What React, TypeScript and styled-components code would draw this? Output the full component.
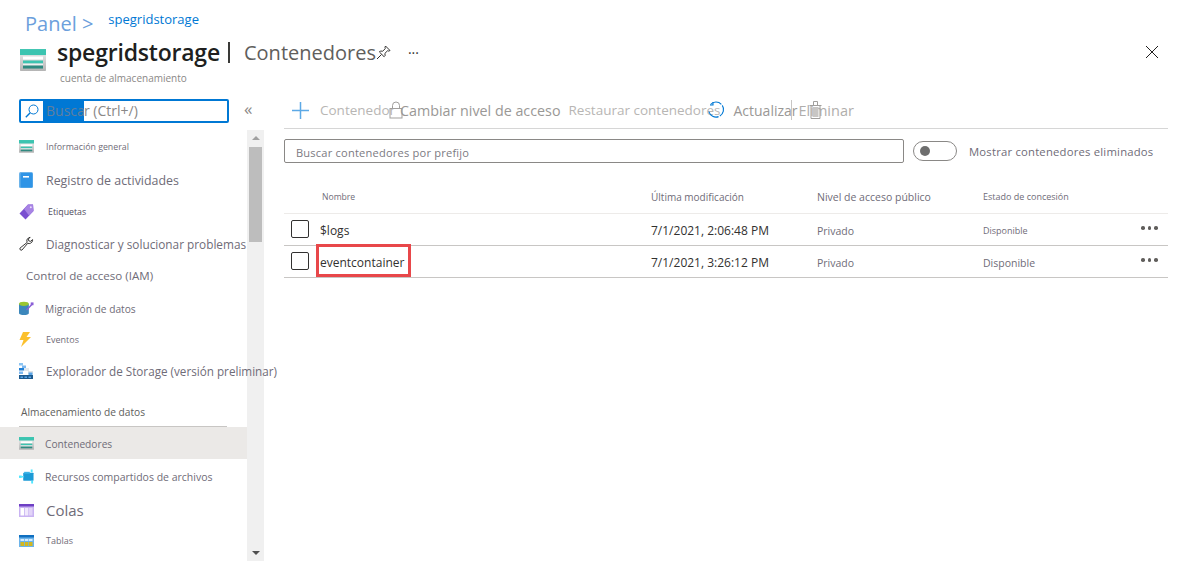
import styled, { createGlobalStyle } from 'styled-components';

const GlobalStyle = createGlobalStyle`
	html, body {
		margin: 0;
		padding: 0;
		background: #ffffff;
		font-family: "Open Sans", "Liberation Sans", sans-serif;
	}
	*, *::before, *::after {
		box-sizing: border-box;
	}
`;

function StorageIcon({ size = 26, id = 'a' }: { size?: number; id?: string }) {
	return (
		<svg width={size} height={size * 0.85} viewBox="0 0 26 22">
			<defs>
				<linearGradient id={`frame-${id}`} x1="0" y1="0" x2="0" y2="1">
					<stop offset="0" stopColor="#f2f2f2" />
					<stop offset="1" stopColor="#b4b4b4" />
				</linearGradient>
			</defs>
			<rect x="0" y="0" width="26" height="22" rx="1" fill={`url(#frame-${id})`} />
			<rect x="0" y="0" width="26" height="6" fill="#3cc4b0" />
			<rect x="3" y="7.500" width="20" height="3" fill="#ffffff" />
			<rect x="3" y="11.500" width="20" height="3" fill="#3cc4b0" />
			<rect x="3" y="14.500" width="20" height="2" fill="#eef0f0" />
			<rect x="3" y="16.500" width="20" height="3" fill="#2f8a80" />
		</svg>
	);
}

function LogIcon() {
	return (
		<svg width="14" height="16" viewBox="0 0 14 16">
			<rect x="0" y="0" width="14" height="16" rx="1.500" fill="#6db4ea" />
			<rect x="1.500" y="1" width="12" height="14.500" rx="1" fill="#2f94e6" />
			<rect x="4" y="4" width="6" height="1.600" fill="#ffffff" />
		</svg>
	);
}

function TagIcon() {
	return (
		<svg width="15" height="16" viewBox="0 0 15 16">
			<path d="M9 0.500h5L14.500 7 6.500 15.500 0.500 9.500z" fill="#7a4fd0" />
			<path d="M9 0.500h5L14.500 7 10 11.500 5 5z" fill="#a783e4" />
			<circle cx="11.800" cy="3.200" r="1" fill="#e8dcfa" />
		</svg>
	);
}

function WrenchIcon() {
	return (
		<svg width="17" height="16" viewBox="0 0 17 16" fill="none" stroke="#201f1e" strokeWidth="1">
			<path d="M10.600 1.200a4 4 0 0 0-1.400 5L1.200 12.600a1.600 1.600 0 0 0 2.200 2.200l6.500-7.600a4 4 0 0 0 5.400-2.800l.1-1.400-2.400 2-2-.6-.4-2 2-2z" />
		</svg>
	);
}

function MigrationIcon() {
	return (
		<svg width="16" height="15" viewBox="0 0 16 15">
			<path d="M0 2.500h10.500v10c0 1.200-2.300 2-5.200 2S0 13.700 0 12.500z" fill="#3b87bb" />
			<ellipse cx="5.200" cy="2.500" rx="5.200" ry="2.200" fill="#9ac631" />
			<path d="M8 9l6-6" stroke="#8a5ed6" strokeWidth="1.500" />
			<rect x="12.500" y="1" width="3" height="3" fill="#8a5ed6" />
		</svg>
	);
}

function BoltIcon() {
	return (
		<svg width="12" height="15" viewBox="0 0 12 15">
			<path d="M4 0h7L7.500 5H12L2 15l2.500-7H0.500z" fill="#fbc02d" />
		</svg>
	);
}

function ExplorerIcon() {
	return (
		<svg width="14" height="16" viewBox="0 0 14 16">
			<rect x="0" y="0" width="4" height="2.500" fill="#8cc4f2" />
			<rect x="3" y="2.500" width="4" height="2.500" fill="#7cb8ef" />
			<rect x="0" y="5" width="5" height="2.500" fill="#1f7fd6" />
			<rect x="5" y="5" width="5" height="3" fill="#e3e9ee" />
			<rect x="9" y="8" width="5" height="3" fill="#dfe3e6" />
			<rect x="0" y="8.500" width="4" height="2.500" fill="#7cb8ef" />
			<rect x="9.500" y="9.500" width="4" height="2.500" fill="#5aa5e6" />
			<rect x="0" y="12" width="14" height="4" fill="#1d5a8f" />
			<rect x="1.500" y="13.500" width="2.500" height="1.500" fill="#5aa5e6" />
			<rect x="5.500" y="13.500" width="2.500" height="1.500" fill="#5aa5e6" />
			<rect x="9.500" y="13.500" width="2.500" height="1.500" fill="#5aa5e6" />
		</svg>
	);
}

function ShareIcon() {
	return (
		<svg width="16" height="15" viewBox="0 0 16 15">
			<rect x="4.500" y="3.500" width="11" height="8.500" rx="0.500" fill="#1c9ad6" />
			<rect x="5.500" y="2.500" width="6" height="2" fill="#3cb4e8" />
			<rect x="0" y="6.500" width="3" height="2.500" fill="#50e6ff" />
			<rect x="3" y="7" width="2" height="1.500" fill="#50e6ff" />
			<rect x="12.500" y="0" width="2" height="3" fill="#50e6ff" />
			<rect x="13" y="12" width="2" height="3" fill="#50e6ff" />
		</svg>
	);
}

function QueueIcon() {
	return (
		<svg width="15" height="13" viewBox="0 0 15 13">
			<rect x="0" y="0" width="15" height="13" fill="#c9b3f2" />
			<rect x="0" y="0" width="15" height="2.500" fill="#6e3fc4" />
			<rect x="1.500" y="4" width="3.500" height="7.500" fill="#ffffff" />
			<rect x="5.800" y="4" width="3.500" height="7.500" fill="#f0e8fc" />
			<rect x="10" y="4" width="3.500" height="7.500" fill="#e2d4f8" />
		</svg>
	);
}

function TableIcon() {
	return (
		<svg width="15" height="12" viewBox="0 0 15 12">
			<rect x="0" y="0" width="15" height="12" fill="#6db4ea" />
			<rect x="0" y="0" width="15" height="2.500" fill="#0f6fc0" />
			<rect x="1.500" y="4" width="3.500" height="2" fill="#d4ecff" />
			<rect x="5.800" y="4" width="3.500" height="2" fill="#d4ecff" />
			<rect x="10" y="4" width="3.500" height="2" fill="#d4ecff" />
			<rect x="1.500" y="7" width="3.500" height="4" fill="#d3b820" />
			<rect x="5.800" y="7" width="3.500" height="4" fill="#d3b820" />
			<rect x="10" y="7" width="3.500" height="4" fill="#d3b820" />
		</svg>
	);
}

function SearchIcon() {
	return (
		<svg width="14" height="14" viewBox="0 0 14 14" fill="none" stroke="#0078d4" strokeWidth="1">
			<circle cx="8.500" cy="5.500" r="4.500" />
			<path d="M5.200 8.800L0.800 13.200" strokeWidth="1.400" />
		</svg>
	);
}

function PinIcon() {
	return (
		<svg width="15" height="15" viewBox="0 0 15 15" fill="none" stroke="#323130" strokeWidth="1">
			<path d="M9.500 1L14 5.500l-1.200.6-1.300-.3-2.600 2.600.2 2.300-1 1L3.400 7l1-1 2.300.2 2.600-2.600-.3-1.300zM5.500 9.500L1 14" />
		</svg>
	);
}

function CloseIcon() {
	return (
		<svg width="14" height="14" viewBox="0 0 14 14" stroke="#201f1e" strokeWidth="1">
			<path d="M1 1l12 12M13 1L1 13" />
		</svg>
	);
}

function PlusIcon() {
	return (
		<svg width="17" height="17" viewBox="0 0 17 17" stroke="#5ca9e6" strokeWidth="1.500">
			<path d="M8.500 0v17M0 8.500h17" />
		</svg>
	);
}

function LockIcon() {
	return (
		<svg width="14" height="18" viewBox="0 0 14 18" fill="none" stroke="#a19f9d" strokeWidth="1">
			<rect x="1" y="7.500" width="12" height="9.500" />
			<path d="M3.500 7.500V4.500a3.500 3.500 0 0 1 7 0v3" />
		</svg>
	);
}

function RefreshIcon() {
	return (
		<svg width="18" height="18" viewBox="0 0 18 18" fill="none" stroke="#0078d4" strokeWidth="1.100">
			<path d="M3.500 3.500A7.500 7.500 0 1 1 1.600 9.500" strokeDasharray="12 1.500" />
			<path d="M6 1v3H3" />
		</svg>
	);
}

function TrashIcon() {
	return (
		<svg width="13" height="18" viewBox="0 0 13 18" fill="none" stroke="#a19f9d" strokeWidth="1">
			<path d="M0.500 4.500h12M2 4.500v13h9v-13M4.500 4.500v-4h4v4" />
			<rect x="3.500" y="6" width="6" height="10" fill="#c8c6c4" stroke="none" />
		</svg>
	);
}

const menuTop = [
	{ icon: <StorageIcon size={15} id="b" />, label: 'Información general', size: 8.8, h: 33, gap: 16 },
	{ icon: <LogIcon />, label: 'Registro de actividades', size: 12.400, h: 34, gap: 16 },
	{ icon: <TagIcon />, label: 'Etiquetas', size: 8.800, h: 29, gap: 18, dark: true },
	{ icon: <WrenchIcon />, label: 'Diagnosticar y solucionar problemas', size: 11.800, h: 35, gap: 16 },
];

const menuMiddle = [
	{ icon: <MigrationIcon />, label: 'Migración de datos', size: 10.200, h: 33, gap: 15 },
	{ icon: <BoltIcon />, label: 'Eventos', size: 9, h: 29, gap: 16 },
	{ icon: <ExplorerIcon />, label: 'Explorador de Storage (versión preliminar)', size: 11.700, h: 34, gap: 16 },
];

const menuBottom = [
	{ icon: <ShareIcon />, label: 'Recursos compartidos de archivos', size: 10.500, h: 35, gap: 15 },
	{ icon: <QueueIcon />, label: 'Colas', size: 15, h: 32, gap: 16 },
	{ icon: <TableIcon />, label: 'Tablas', size: 9, h: 29, gap: 16 },
];

const rows = [
	{ name: '$logs', date: '7/1/2021, 2:06:48 PM', state: 'Disponible', stateSize: 9 },
	{ name: 'eventcontainer', date: '7/1/2021, 3:26:12 PM', state: 'Disponible', stateSize: 10.500, marked: true },
];

export default function App() {
	return (
		<Page>
			<GlobalStyle />
			<Breadcrumb>
				<PanelLink>Panel &gt;</PanelLink>
				<CrumbLink>spegridstorage</CrumbLink>
			</Breadcrumb>

			<Header>
				<HeaderIcon>
					<StorageIcon />
				</HeaderIcon>
				<HeaderText>
					<TitleLine>
						<Title>spegridstorage</Title>
						<TitleBar />
						<PageName>Contenedores</PageName>
						<PinIcon />
						<MoreSmall>···</MoreSmall>
					</TitleLine>
					<Subtitle>cuenta de almacenamiento</Subtitle>
				</HeaderText>
				<CloseButton>
					<CloseIcon />
				</CloseButton>
			</Header>

			<Body>
				<Sidebar>
					<SearchRow>
						<SearchBox>
							<SearchIconCell>
								<SearchIcon />
							</SearchIconCell>
							<SearchText>
								<Selected>Busca</Selected>r (Ctrl+/)
							</SearchText>
						</SearchBox>
						<Collapse>«</Collapse>
					</SearchRow>
					<MenuArea>
						<Menu>
							{menuTop.map((m) => (
								<MenuRow key={m.label} $h={m.h}>
									<MenuIcon>{m.icon}</MenuIcon>
									<MenuLabel $size={m.size} $gap={m.gap} $dark={m.dark}>
										{m.label}
									</MenuLabel>
								</MenuRow>
							))}
							<GroupLabel>Control de acceso (IAM)</GroupLabel>
							{menuMiddle.map((m) => (
								<MenuRow key={m.label} $h={m.h}>
									<MenuIcon>{m.icon}</MenuIcon>
									<MenuLabel $size={m.size} $gap={m.gap}>
										{m.label}
									</MenuLabel>
								</MenuRow>
							))}
							<SectionLabel>Almacenamiento de datos</SectionLabel>
							<MenuRow $h={32} $active>
								<MenuIcon>
									<StorageIcon size={15} id="c" />
								</MenuIcon>
								<MenuLabel $size={10.200} $gap={15}>
									Contenedores
								</MenuLabel>
							</MenuRow>
							{menuBottom.map((m) => (
								<MenuRow key={m.label} $h={m.h}>
									<MenuIcon>{m.icon}</MenuIcon>
									<MenuLabel $size={m.size} $gap={m.gap}>
										{m.label}
									</MenuLabel>
								</MenuRow>
							))}
						</Menu>
						<Scrollbar>
							<ArrowUp />
							<Thumb />
							<ScrollSpace />
							<ArrowDown />
						</Scrollbar>
					</MenuArea>
				</Sidebar>

				<Main>
					<Toolbar>
						<PlusIcon />
						<ToolText $ml={11} $w={69}>
							Contenedor
						</ToolText>
						<ToolIcon>
							<LockIcon />
						</ToolIcon>
						<ToolText $ml={-3} $size={14.300} $dark>
							Cambiar nivel de acceso
						</ToolText>
						<ToolText $ml={8} $w={139}>
							Restaurar contenedores
						</ToolText>
						<RefreshIcon />
						<ToolText $ml={8} $size={14} $dark>
							Actualizar
						</ToolText>
						<ToolDivider />
						<DeleteButton>
							Eliminar
							<TrashOverlay>
								<TrashIcon />
							</TrashOverlay>
						</DeleteButton>
					</Toolbar>

					<FilterRow>
						<FilterInput>Buscar contenedores por prefijo</FilterInput>
						<Toggle>
							<ToggleDot />
						</Toggle>
						<ToggleLabel>Mostrar contenedores eliminados</ToggleLabel>
					</FilterRow>

					<HeadRow>
						<span />
						<HeadCell $size={8.600} $ml={2}>
							Nombre
						</HeadCell>
						<HeadCell $size={10}>Última modificación</HeadCell>
						<HeadCell $size={10.500}>Nivel de acceso público</HeadCell>
						<HeadCell $size={9}>Estado de concesión</HeadCell>
						<span />
					</HeadRow>

					{rows.map((r) => (
						<DataRow key={r.name}>
							<Checkbox />
							<NameCell $marked={r.marked}>{r.name}</NameCell>
							<DateCell>{r.date}</DateCell>
							<MutedCell $size={10.500}>Privado</MutedCell>
							<MutedCell $size={r.stateSize}>{r.state}</MutedCell>
							<RowMore>
								<i />
								<i />
								<i />
							</RowMore>
						</DataRow>
					))}
				</Main>
			</Body>
		</Page>
	);
}

const Page = styled.div`
	width: 1188px;
	height: 561px;
	overflow: hidden;
	background: #ffffff;
	display: flex;
	flex-direction: column;
`;

const Breadcrumb = styled.div`
	height: 37px;
	padding-left: 25px;
	display: flex;
	align-items: flex-start;
	gap: 15px;
`;

const PanelLink = styled.span`
	font-size: 20px;
	line-height: 24px;
	margin-top: 12px;
	color: #6c9fdc;
`;

const CrumbLink = styled.span`
	font-size: 13px;
	line-height: 16px;
	margin-top: 11px;
	color: #0078d4;
`;

const Header = styled.div`
	height: 50px;
	padding: 0 29px 0 20px;
	display: flex;
	align-items: flex-start;
`;

const HeaderIcon = styled.div`
	width: 37px;
	padding-top: 12px;
`;

const HeaderText = styled.div`
	flex: 1;
	display: flex;
	flex-direction: column;
`;

const TitleLine = styled.div`
	display: flex;
	align-items: center;
	height: 30px;
`;

const Title = styled.h1`
	margin: 0;
	font-size: 23px;
	font-weight: 600;
	color: #201f1e;
	letter-spacing: -0.2px;
`;

const TitleBar = styled.span`
	width: 2px;
	height: 21px;
	margin: 0 14px 0 8px;
	background: #3a3a38;
`;

const PageName = styled.span`
	font-size: 20px;
	color: #605e5c;
`;

const MoreSmall = styled.span`
	margin-left: 17px;
	font-size: 14px;
	color: #323130;
`;

const Subtitle = styled.div`
	margin: 4px 0 0 3px;
	font-size: 10px;
	line-height: 14px;
	color: #8a8886;
`;

const CloseButton = styled.div`
	padding-top: 5px;
`;

const Body = styled.div`
	flex: 1;
	display: flex;
	min-height: 0;
`;

const Sidebar = styled.aside`
	width: 264px;
	display: flex;
	flex-direction: column;
`;

const SearchRow = styled.div`
	height: 43px;
	padding: 12px 0 0 19px;
	display: flex;
	align-items: flex-start;
`;

const SearchBox = styled.div`
	width: 210px;
	height: 24px;
	border: 2px solid #0078d4;
	border-radius: 2px;
	display: flex;
	align-items: stretch;
	background: #ffffff;
`;

const SearchIconCell = styled.div`
	width: 22px;
	display: flex;
	align-items: center;
	justify-content: center;
`;

const SearchText = styled.div`
	font-size: 14px;
	line-height: 20px;
	color: #8a8886;
	white-space: nowrap;
`;

const Selected = styled.span`
	display: inline-block;
	width: 41px;
	padding-left: 3px;
	background: #0078d4;
	color: #5f7f9f;
`;

const Collapse = styled.span`
	margin: -2px 0 0 15px;
	font-size: 17px;
	line-height: 24px;
	color: #8a8886;
`;

const MenuArea = styled.div`
	flex: 1;
	display: flex;
	min-height: 0;
`;

const Menu = styled.nav`
	width: 247px;
	display: flex;
	flex-direction: column;
	position: relative;
	z-index: 1;
`;

const MenuRow = styled.div<{ $h: number; $active?: boolean }>`
	height: ${(p) => p.$h}px;
	flex-shrink: 0;
	padding: ${(p) => (p.$active ? '1px' : '0')} 0 0 19px;
	display: flex;
	align-items: center;
	background: ${(p) => (p.$active ? '#ebe9e7' : 'transparent')};
`;

const MenuIcon = styled.div`
	width: 15px;
	display: flex;
	justify-content: flex-start;
	flex-shrink: 0;
`;

const MenuLabel = styled.span<{ $size: number; $gap: number; $dark?: boolean }>`
	margin-left: ${(p) => p.$gap - 4}px;
	font-size: ${(p) => p.$size}px;
	color: ${(p) => (p.$dark ? '#4f4b5c' : '#6f6c78')};
	white-space: nowrap;
`;

const GroupLabel = styled.div`
	height: 31px;
	flex-shrink: 0;
	padding-left: 26px;
	font-size: 11.600px;
	line-height: 29px;
	color: #6f6c78;
`;

const SectionLabel = styled.div`
	height: 32px;
	flex-shrink: 0;
	margin: 7px 20px 0 19px;
	padding: 10px 0 0 2px;
	border-bottom: 1px solid #c8c6c4;
	font-size: 10.200px;
	line-height: 14px;
	color: #605e5c;
`;

const Scrollbar = styled.div`
	width: 17px;
	background: #f0f0f0;
	display: flex;
	flex-direction: column;
	align-items: center;
`;

const Thumb = styled.div`
	width: 13px;
	height: 95px;
	margin-top: 7px;
	background: #bdbdbd;
`;

const ScrollSpace = styled.div`
	flex: 1;
`;

const ArrowUp = styled.div`
	margin-top: 6px;
	border-left: 4px solid transparent;
	border-right: 4px solid transparent;
	border-bottom: 4px solid #a0a0a0;
`;

const ArrowDown = styled.div`
	margin-bottom: 6px;
	border-left: 4px solid transparent;
	border-right: 4px solid transparent;
	border-top: 4px solid #505050;
`;

const Main = styled.main`
	flex: 1;
	margin: 0 20px 0 20px;
	display: flex;
	flex-direction: column;
`;

const Toolbar = styled.div`
	height: 42px;
	padding: 5px 0 0 8px;
	border-bottom: 1px solid #d6d6d6;
	display: flex;
	align-items: center;
	flex-shrink: 0;
`;

const ToolText = styled.span<{ $ml: number; $w?: number; $dark?: boolean; $size?: number }>`
	margin-left: ${(p) => p.$ml}px;
	${(p) => (p.$w ? `width: ${p.$w}px; flex-shrink: 0;` : '')}
	font-size: ${(p) => p.$size ?? 13.500}px;
	color: ${(p) => (p.$dark ? '#9a9896' : '#b8b6b4')};
	white-space: nowrap;
`;

const ToolIcon = styled.span`
	display: flex;
	flex-shrink: 0;
`;

const ToolDivider = styled.span`
	width: 1px;
	height: 20px;
	margin-left: -7px;
	background: #c8c6c4;
`;

const DeleteButton = styled.span`
	position: relative;
	margin-left: 7px;
	font-size: 14.500px;
	color: #b0aeac;
`;

const TrashOverlay = styled.span`
	position: absolute;
	left: 10px;
	top: 0;
`;

const FilterRow = styled.div`
	height: 24px;
	margin-top: 10px;
	display: flex;
	align-items: center;
	flex-shrink: 0;
`;

const FilterInput = styled.div`
	width: 620px;
	height: 24px;
	padding-left: 11px;
	border: 1px solid #8a8886;
	border-radius: 2px;
	font-size: 11.100px;
	line-height: 25px;
	color: #7c7a82;
	letter-spacing: 0.2px;
`;

const Toggle = styled.div`
	width: 44px;
	height: 20px;
	margin-left: 9px;
	padding-left: 6px;
	border: 1px solid #8a8886;
	border-radius: 10px;
	display: flex;
	align-items: center;
`;

const ToggleDot = styled.div`
	width: 10px;
	height: 10px;
	border-radius: 50%;
	background: #6e6e6e;
`;

const ToggleLabel = styled.span`
	margin-left: 12px;
	font-size: 11.300px;
	letter-spacing: 0.2px;
	color: #6f6c78;
	white-space: nowrap;
`;

const columns = '36px 331px 166px 166px 1fr 27px';

const HeadRow = styled.div`
	height: 51px;
	padding-top: 17px;
	display: grid;
	grid-template-columns: ${columns};
	align-items: center;
	border-bottom: 1px solid #edebe9;
	flex-shrink: 0;
`;

const HeadCell = styled.span<{ $size: number; $ml?: number }>`
	margin-left: ${(p) => p.$ml ?? 0}px;
	font-size: ${(p) => p.$size}px;
	color: #6f6c78;
	white-space: nowrap;
`;

const DataRow = styled.div`
	height: 32px;
	padding-top: 2px;
	display: grid;
	grid-template-columns: ${columns};
	align-items: center;
	border-bottom: 1px solid #c8c6c4;
	flex-shrink: 0;
`;

const Checkbox = styled.div`
	width: 18px;
	height: 18px;
	margin: -4px 0 0 7px;
	border: 1px solid #323130;
	border-radius: 2px;
`;

const NameCell = styled.span<{ $marked?: boolean }>`
	position: relative;
	font-size: 12px;
	color: #323130;
	white-space: nowrap;
	&::after {
		content: '';
		display: ${(p) => (p.$marked ? 'block' : 'none')};
		position: absolute;
		left: -4px;
		top: -10px;
		width: 95px;
		height: 33px;
		border: 3px solid #e8474a;
	}
`;

const DateCell = styled.span`
	font-size: 12px;
	color: #323130;
	white-space: nowrap;
`;

const MutedCell = styled.span<{ $size: number }>`
	font-size: ${(p) => p.$size}px;
	color: #6f6c78;
	white-space: nowrap;
`;

const RowMore = styled.div`
	display: flex;
	gap: 3px;
	margin-top: -5px;
	i {
		width: 3.500px;
		height: 3.500px;
		border-radius: 50%;
		background: #605e5c;
	}
`;
